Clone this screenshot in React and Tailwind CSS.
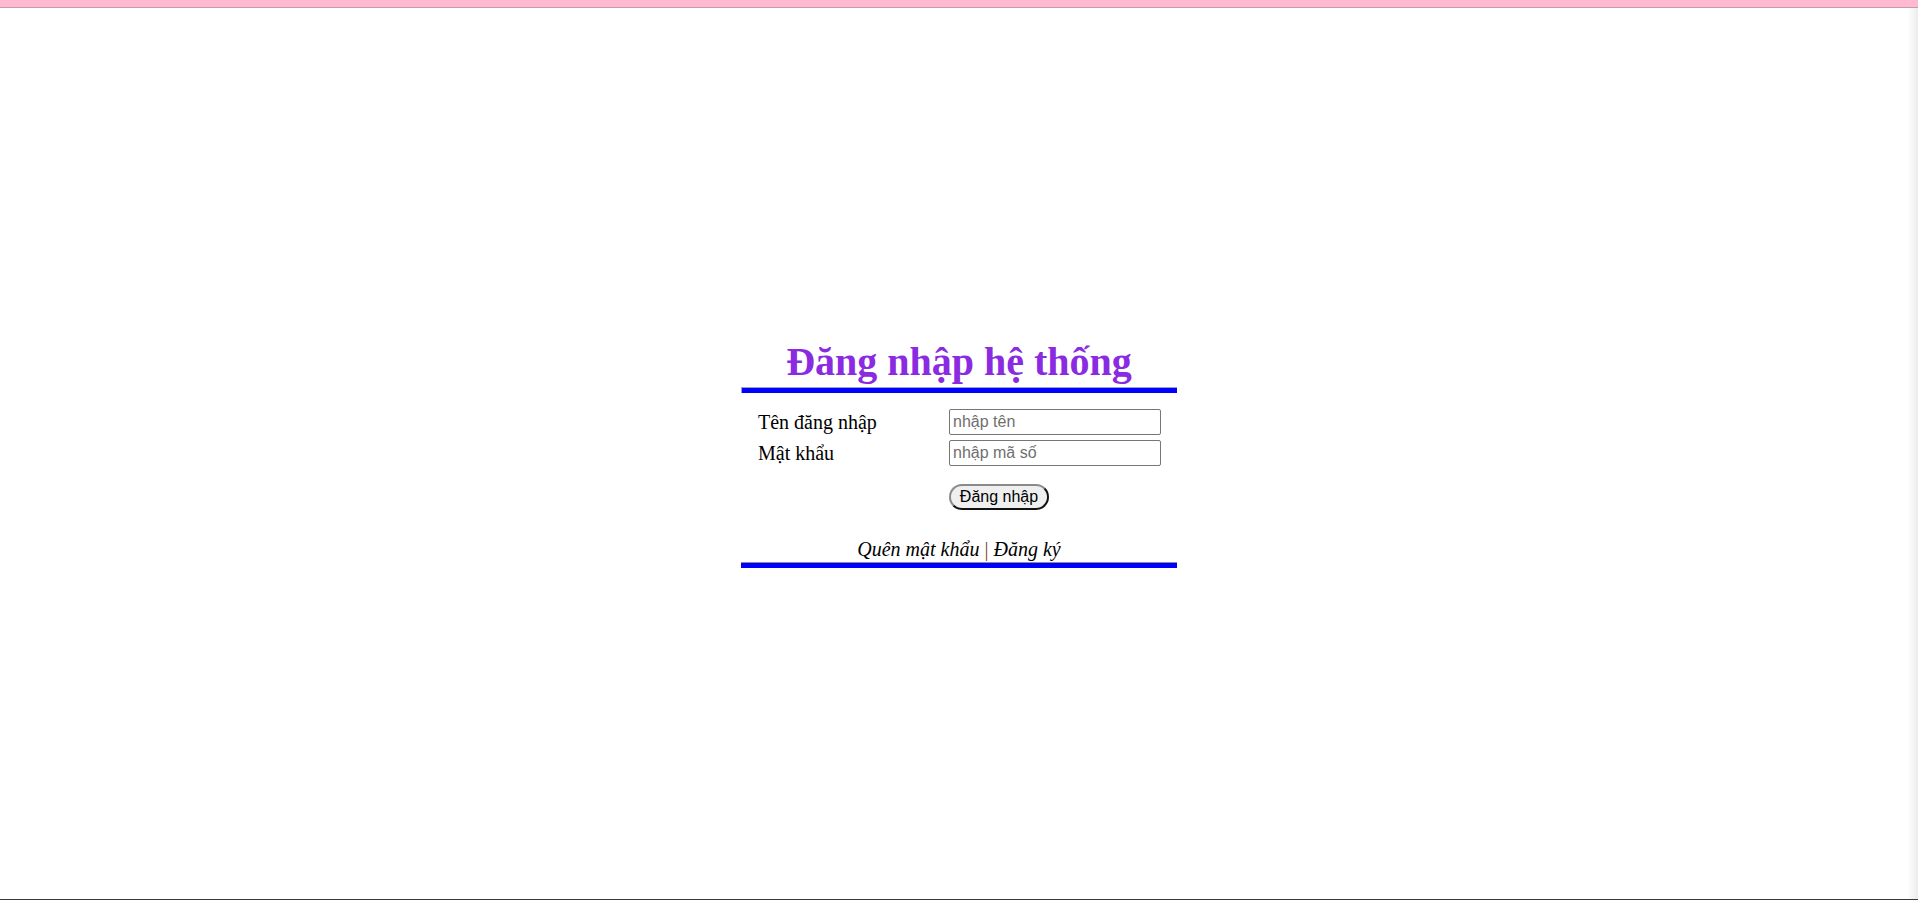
import React from 'react';

const serif = { fontFamily: '"Liberation Serif", "Times New Roman", serif' };

const Field = ({ label, placeholder, type = 'text' }) => (
  <>
    <label className="h-[26px] flex items-center text-[20px] text-black leading-[22px]">{label}</label>
    <input
      type={type}
      placeholder={placeholder}
      className="h-[26px] w-[212px] border border-[#767676] rounded-[2px] pl-[3px] pr-[2px] text-[16px] text-black placeholder:text-[#6f6f6f] outline-none bg-white font-['Liberation_Sans',Arial,sans-serif]"
    />
  </>
);

export default function App() {
  return (
    <div className="w-full h-[900px] flex flex-col bg-white overflow-hidden" style={serif}>
      <div className="h-[8px] bg-[#ffb9d1] border-b border-[#c79aaa] shrink-0" />
      <div className="flex-1 flex">
        <main className="flex-1 pl-[11px]">
          <div className="w-[436px] mx-auto mt-[331px]">
            <h1 className="text-[40px] leading-[46px] font-bold text-center text-[#8a2be2]">Đăng nhập hệ thống</h1>
            <div className="mt-[2px] h-[6px] bg-[#0000ff] border-t border-l border-[#a0a0c8]" />

            <form className="mt-[16px] pl-[17px] grid grid-cols-[191px_212px] gap-y-[5px]">
              <Field label="Tên đăng nhập" placeholder="nhập tên" />
              <Field label="Mật khẩu" placeholder="nhập mã số" type="password" />
              <div />
              <div className="mt-[13px]">
                <button
                  type="button"
                  className="h-[26px] w-[100px] rounded-full border-2 border-t-[#8a8a8a] border-l-[#8a8a8a] border-b-[#111] border-r-[#111] bg-[#efefef] text-[16px] text-black leading-none font-['Liberation_Sans',Arial,sans-serif]"
                >
                  Đăng nhập
                </button>
              </div>
            </form>

            <p className="mt-[28px] text-center italic text-[20px] leading-[22px] text-black">
              Quên mật khẩu <span className="not-italic text-[#7a4a24]">|</span> Đăng ký
            </p>
            <div className="mt-[2px] h-[6px] bg-[#0000ff] border-t border-[#8c8c8c]" />
          </div>
        </main>
        <aside className="w-[11px] bg-gradient-to-r from-white to-[#ececec]" />
      </div>
      <div className="h-[1px] bg-[#3c3838] shrink-0" />
    </div>
  );
}
